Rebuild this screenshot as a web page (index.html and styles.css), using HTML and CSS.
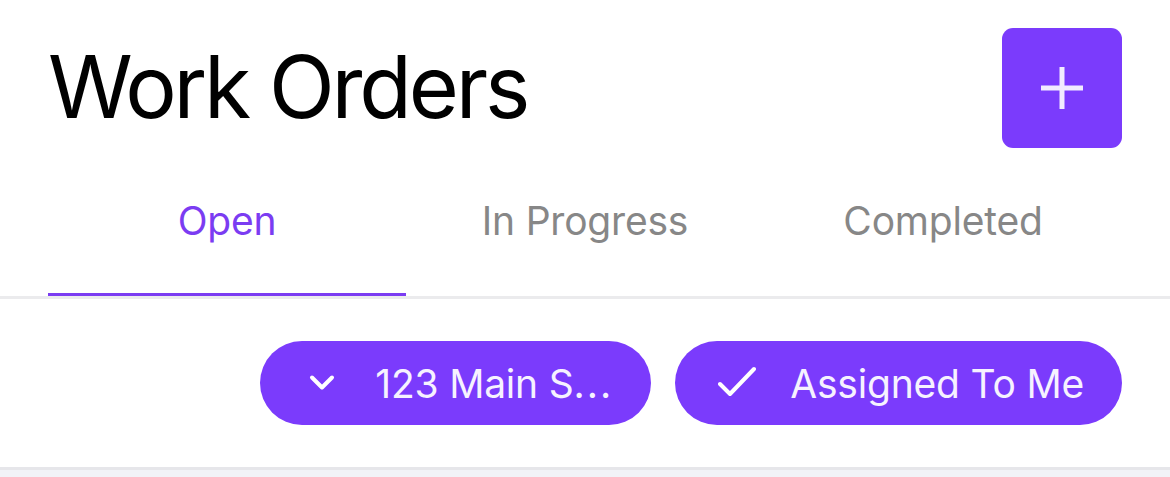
FILE: index.html
```html
<!DOCTYPE html>
<html>
<head>
<meta charset="utf-8">
<link rel="stylesheet" href="styles.css">
</head>
<body>
<div class="page">
  <header class="header">
    <h1 class="title">Work Orders</h1>
    <button class="add-btn" aria-label="Add">
      <svg width="44" height="44" viewBox="0 0 44 44"><path d="M22 1V43M1 22H43" stroke="#f1ebff" stroke-width="5" fill="none"/></svg>
    </button>
  </header>
  <nav class="tabs">
    <div class="tab-grid">
      <div class="tab active">Open</div>
      <div class="tab">In Progress</div>
      <div class="tab">Completed</div>
    </div>
  </nav>
  <section class="filters">
    <button class="chip">
      <span class="chip-icon">
        <svg width="38" height="38" viewBox="0 0 38 38"><path d="M9 13.5L19 23.5L29 13.5" stroke="#fff" stroke-width="4" fill="none" stroke-linecap="round" stroke-linejoin="round"/></svg>
      </span>
      <span class="chip-text">123 Main S<span class="dots">...</span></span>
    </button>
    <button class="chip">
      <span class="chip-icon">
        <svg width="38" height="38" viewBox="0 0 38 38"><path d="M2 20L12 30L36 5" stroke="#fff" stroke-width="4" fill="none" stroke-linecap="round" stroke-linejoin="round"/></svg>
      </span>
      <span class="chip-text">Assigned To Me</span>
    </button>
  </section>
  <div class="footer-band"></div>
</div>
</body>
</html>
```
FILE: styles.css
```css
html, body {
  margin: 0;
  padding: 0;
  background: #ffffff;
}
body {
  font-family: Inter, "Liberation Sans", Arial, sans-serif;
  width: 1170px;
  height: 477px;
  overflow: hidden;
}
.page {
  display: flex;
  flex-direction: column;
  height: 477px;
}
.header {
  display: flex;
  justify-content: space-between;
  align-items: flex-start;
  padding: 28px 48px 0 48px;
  height: 120px;
  flex-shrink: 0;
}
.title {
  margin: 0;
  padding-top: 9px;
  font-family: Inter, "Liberation Sans", sans-serif;
  font-weight: 400;
  font-size: 86px;
  line-height: 100px;
  letter-spacing: -3.2px;
  color: #000;
}
.add-btn {
  width: 120px;
  height: 120px;
  border: none;
  border-radius: 11px;
  background: #7b3bfc;
  display: flex;
  align-items: center;
  justify-content: center;
  padding: 0;
}
.tabs {
  border-bottom: 3px solid #ebebed;
  flex-shrink: 0;
}
.tab-grid {
  display: grid;
  grid-template-columns: repeat(3, 1fr);
  padding: 0 48px;
}
.tab {
  height: 145px;
  display: flex;
  align-items: center;
  justify-content: center;
  border-bottom: 3px solid transparent;
  font-size: 39px;
  letter-spacing: -0.2px;
  color: #878787;
}
.tab.active {
  color: #7b3cf2;
  border-bottom-color: #7b3cf2;
}
.filters {
  display: flex;
  justify-content: flex-end;
  align-items: flex-start;
  gap: 24px;
  padding: 42px 48px 0 48px;
  height: 168px;
  box-sizing: border-box;
  flex-shrink: 0;
}
.chip {
  height: 84px;
  border: none;
  border-radius: 42px;
  background: #7b3bfc;
  display: flex;
  align-items: center;
  gap: 34px;
  padding: 0 38px 0 43px;
  color: #f6f2ff;
  font-family: Inter, "Liberation Sans", sans-serif;
  font-size: 39px;
  letter-spacing: -0.2px;
}
.dots {
  letter-spacing: 2px;
}
.chip-icon {
  width: 38px;
  height: 38px;
  display: flex;
}
.footer-band {
  flex: 1;
  border-top: 3px solid #e6e6ea;
  background: #f2f2f7;
}
```
